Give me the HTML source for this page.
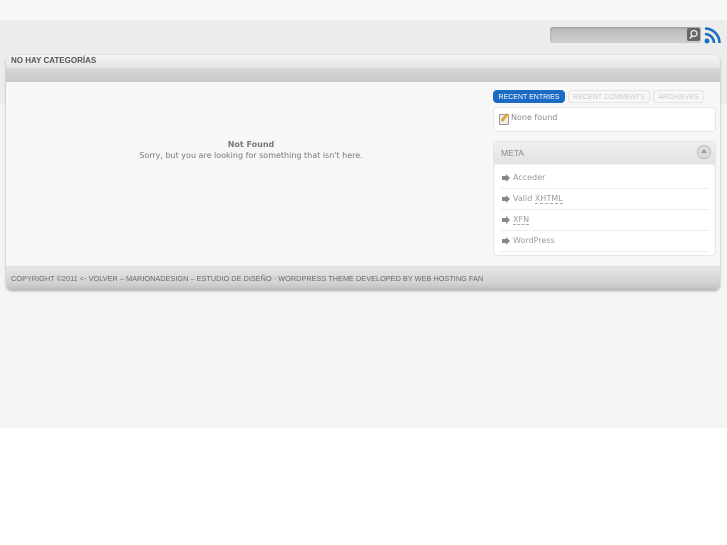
<!DOCTYPE html>
<html><head><meta charset="utf-8"><style>
body{margin:0;width:727px;height:545px;background:#fff;font-family:"Liberation Sans",sans-serif;position:relative;overflow:hidden}
.bg{position:absolute;left:0;top:0;width:727px;height:428px;background:#f4f4f4}
.top{position:absolute;left:0;top:0;width:727px;height:20px;background:#f7f7f7}
.hdr{position:absolute;left:0;top:20px;width:727px;height:84px;background:#ececec}
.search{position:absolute;left:550px;top:27px;width:151px;height:16px;border-radius:3px;background:linear-gradient(#b8b8b8,#cfcfcf);box-shadow:inset 0 1px 2px #999}
.sbtn{position:absolute;right:1px;top:1px;width:13px;height:13px;background:#666;border-radius:2px}
.wrap{position:absolute;left:6px;top:55px;width:714px;height:235px;border-radius:6px;background:#f7f7f7;box-shadow:0 1px 2px #aaa}
.bar{height:27px;border-radius:6px 6px 0 0;background:linear-gradient(#f4f4f4 0,#e6e6e6 12px,#d6d6d6 14px,#c8c8c8 27px);font-size:8px;color:#555;font-weight:bold;padding:1px 5px;box-sizing:border-box}
.foot{position:absolute;left:0;bottom:0;width:714px;height:24px;border-radius:0 0 6px 6px;background:linear-gradient(#e6e6e6,#d2d2d2 70%,#bdbdbd);font-size:7.35px;color:#6a6a6a;padding:7px 5px;box-sizing:border-box;border-top:1px solid #ddd}
.nf{position:absolute;left:0;width:490px;top:85px;text-align:center;font-family:"DejaVu Sans",sans-serif;font-size:8px;color:#777}
.tabs{position:absolute;left:487px;top:35px;font-size:7px;font-family:"Liberation Sans",sans-serif}
.tab{position:absolute;top:0;height:13px;line-height:13px;border-radius:4px;border:1px solid #e4e4e4;color:#ccc;text-align:center;box-sizing:border-box}
.box{position:absolute;background:#fff;border:1px solid #e6e6e6;border-radius:4px;box-sizing:border-box}
.li{font-family:"DejaVu Sans",sans-serif;font-size:8px;color:#999;height:20px;line-height:20px;border-bottom:1px solid #eee;margin:0 6px;padding-left:13px;position:relative}
.li:before{content:"";position:absolute;left:2px;top:8px;width:4px;height:4px;background:#888}
.li:after{content:"";position:absolute;left:6px;top:6px;border-left:4px solid #888;border-top:4px solid transparent;border-bottom:4px solid transparent}
.u{border-bottom:1px dashed #aaa}
</style></head><body>
<div class="bg"></div><div class="top"></div><div class="hdr"></div>
<div class="search"><div class="sbtn"><svg width="13" height="13"><circle cx="7" cy="5.5" r="3" fill="none" stroke="#eee" stroke-width="1.3"/><path d="M5 8 L3 10.5" stroke="#eee" stroke-width="1.6"/></svg></div></div>
<svg style="position:absolute;left:704px;top:27px" width="17" height="17"><circle cx="3" cy="14" r="2.5" fill="#1a6fc0"/><path d="M1 7a9 9 0 0 1 9 9" stroke="#1a6fc0" stroke-width="2.6" fill="none"/><path d="M1 1.5a14.5 14.5 0 0 1 14.5 14.5" stroke="#1a6fc0" stroke-width="2.6" fill="none"/></svg>
<div class="wrap">
<div class="bar">NO HAY CATEGORÍAS</div>
<div class="nf"><b>Not Found</b><br><span style="line-height:14px">Sorry, but you are looking for something that isn't here.</span></div>
<div class="tabs">
<div class="tab" style="left:0;width:72px;background:#1a6bc4;color:#fff;border-color:#1a6bc4">RECENT ENTRIES</div>
<div class="tab" style="left:75px;width:82px">RECENT COMMENTS</div>
<div class="tab" style="left:160px;width:51px">ARCHIEVES</div>
</div>
<div class="box" style="left:487px;top:52px;width:223px;height:25px;font-family:'DejaVu Sans',sans-serif;font-size:8px;color:#888;padding:5px 0 0 17px">
<span style="position:absolute;left:5px;top:6px;width:8px;height:9px;border:1px solid #999;background:#eee;border-radius:1px"></span>
<span style="position:absolute;left:9px;top:5px;width:3px;height:9px;background:#e6a23c;transform:rotate(40deg)"></span>None found</div>
<div class="box" style="left:487px;top:86px;width:223px;height:115px;background:#f2f2f2">
<div style="height:22px;background:linear-gradient(#f0f0f0,#e2e2e2);font-size:8.5px;color:#888;padding:6px 7px;box-sizing:border-box">META</div>
<div style="position:absolute;right:4px;top:3px;width:14px;height:14px;border-radius:50%;background:#ddd;border:1px solid #bbb;box-sizing:border-box"><div style="margin:3px auto 0;width:0;border-left:3px solid transparent;border-right:3px solid transparent;border-bottom:4px solid #999"></div></div>
<div style="position:absolute;left:0;top:23px;width:221px;height:90px;background:#fff;border-radius:4px;padding-top:3px;box-sizing:border-box">
<div class="li">Acceder</div><div class="li">Valid <span class="u">XHTML</span></div><div class="li"><span class="u">XFN</span></div><div class="li">WordPress</div>
</div></div>
<div class="foot">COPYRIGHT ©2011 &lt;- VOLVER – MARIONADESIGN – ESTUDIO DE DISEÑO - WORDPRESS THEME DEVELOPED BY WEB HOSTING FAN</div>
</div>
</body></html>
